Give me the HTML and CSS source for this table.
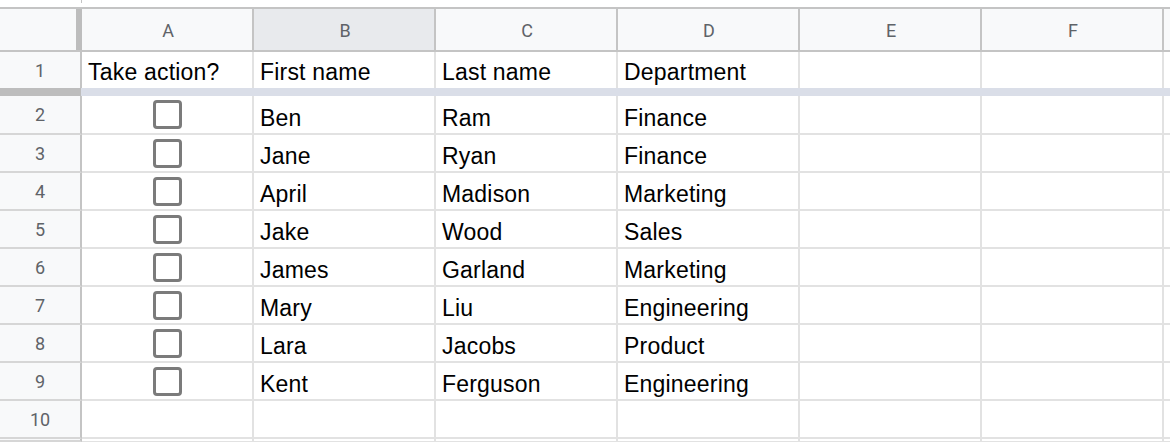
FILE: index.html
```html
<!DOCTYPE html>
<html>
<head>
<meta charset="utf-8">
<link rel="stylesheet" href="styles.css">
</head>
<body>
<div class="sheet">
  <div class="top"><div class="top-space"></div><div class="tick"></div></div>
  <div class="row hdr">
    <div class="corner"></div>
    <div class="ch ca">A</div>
    <div class="ch sel">B</div>
    <div class="ch">C</div>
    <div class="ch">D</div>
    <div class="ch">E</div>
    <div class="ch">F</div>
    <div class="ch rest"></div>
  </div>
  <div class="row r1">
    <div class="rh">1</div>
    <div class="c ca">Take action?</div>
    <div class="c">First name</div>
    <div class="c">Last name</div>
    <div class="c">Department</div>
    <div class="c"></div>
    <div class="c"></div>
    <div class="c rest"></div>
  </div>
  <div class="band"><div class="band-l"></div><div class="band-r"></div></div>
  <div class="row r2">
    <div class="rh">2</div>
    <div class="c ca cb"><span class="box"></span></div>
    <div class="c">Ben</div><div class="c">Ram</div><div class="c">Finance</div>
    <div class="c"></div><div class="c"></div><div class="c rest"></div>
  </div>
  <div class="row">
    <div class="rh">3</div>
    <div class="c ca cb"><span class="box"></span></div>
    <div class="c">Jane</div><div class="c">Ryan</div><div class="c">Finance</div>
    <div class="c"></div><div class="c"></div><div class="c rest"></div>
  </div>
  <div class="row">
    <div class="rh">4</div>
    <div class="c ca cb"><span class="box"></span></div>
    <div class="c">April</div><div class="c">Madison</div><div class="c">Marketing</div>
    <div class="c"></div><div class="c"></div><div class="c rest"></div>
  </div>
  <div class="row">
    <div class="rh">5</div>
    <div class="c ca cb"><span class="box"></span></div>
    <div class="c">Jake</div><div class="c">Wood</div><div class="c">Sales</div>
    <div class="c"></div><div class="c"></div><div class="c rest"></div>
  </div>
  <div class="row">
    <div class="rh">6</div>
    <div class="c ca cb"><span class="box"></span></div>
    <div class="c">James</div><div class="c">Garland</div><div class="c">Marketing</div>
    <div class="c"></div><div class="c"></div><div class="c rest"></div>
  </div>
  <div class="row">
    <div class="rh">7</div>
    <div class="c ca cb"><span class="box"></span></div>
    <div class="c">Mary</div><div class="c">Liu</div><div class="c">Engineering</div>
    <div class="c"></div><div class="c"></div><div class="c rest"></div>
  </div>
  <div class="row">
    <div class="rh">8</div>
    <div class="c ca cb"><span class="box"></span></div>
    <div class="c">Lara</div><div class="c">Jacobs</div><div class="c">Product</div>
    <div class="c"></div><div class="c"></div><div class="c rest"></div>
  </div>
  <div class="row">
    <div class="rh">9</div>
    <div class="c ca cb"><span class="box"></span></div>
    <div class="c">Kent</div><div class="c">Ferguson</div><div class="c">Engineering</div>
    <div class="c"></div><div class="c"></div><div class="c rest"></div>
  </div>
  <div class="row">
    <div class="rh">10</div>
    <div class="c ca"></div>
    <div class="c"></div><div class="c"></div><div class="c"></div>
    <div class="c"></div><div class="c"></div><div class="c rest"></div>
  </div>
  <div class="row last">
    <div class="rh"></div>
    <div class="c ca"></div>
    <div class="c"></div><div class="c"></div><div class="c"></div>
    <div class="c"></div><div class="c"></div><div class="c rest"></div>
  </div>
</div>
</body>
</html>
```
FILE: styles.css
```css
* { box-sizing: border-box; }
html, body { margin: 0; padding: 0; background: #fff; }
body { width: 1170px; height: 442px; overflow: hidden; font-family: "Liberation Sans", Arial, sans-serif; }
.sheet { display: flex; flex-direction: column; height: 442px; overflow: hidden; }
.top { display: flex; height: 9px; flex-shrink: 0; border-bottom: 2px solid #c4c4c4; }
.top-space { width: 81px; }
.tick { width: 1px; height: 3px; background: #c4c4c4; }
.row { display: flex; height: 38px; flex-shrink: 0; }
.row.r2 { height: 39px; }
.row.hdr { height: 43px; border-bottom: 2px solid #c4c4c4; }
.row.r1 { height: 36px; }
.row.last { height: 3px; }
.corner { width: 82px; flex-shrink: 0; background: #f8f9fa; border-right: 6px solid #bdbdbd; }
.ch { width: 182px; flex-shrink: 0; background: #f8f9fa; border-right: 2px solid #c4c4c4; display: flex; align-items: center; justify-content: center; font-family: Roboto, "Liberation Sans", sans-serif; font-size: 18px; color: #5f6368; padding: 1px 0 0 2px; }
.ch.sel { background: #e8eaed; }
.ca { width: 172px !important; }
.rest { flex: 1 1 auto; width: auto !important; border-right: none !important; }
.rh { width: 82px; flex-shrink: 0; background: #f8f9fa; border-right: 2px solid #c4c4c4; border-bottom: 2px solid #d6d6d6; display: flex; align-items: center; justify-content: center; font-family: Roboto, "Liberation Sans", sans-serif; font-size: 18px; color: #5f6368; }
.c { width: 182px; flex-shrink: 0; border-right: 2px solid #e2e2e2; border-bottom: 2px solid #e2e2e2; display: flex; align-items: flex-end; padding: 0 6px 2px 6px; font-size: 23px; line-height: 26px; letter-spacing: 0.2px; color: #000; white-space: nowrap; overflow: hidden; }
.r1 .c, .r1 .rh { border-bottom: none; }
.r1 .c { padding-bottom: 3px; }
.c.cb { align-items: center; justify-content: center; padding: 0; }
.box { display: block; width: 29px; height: 29px; border: 3px solid #7b7b7b; border-radius: 4px; margin-left: 1px; }
.band { display: flex; height: 8px; flex-shrink: 0; }
.band-l { width: 81px; background: #bdbdbd; }
.band-r { flex: 1; background: #dadee8; }
```
